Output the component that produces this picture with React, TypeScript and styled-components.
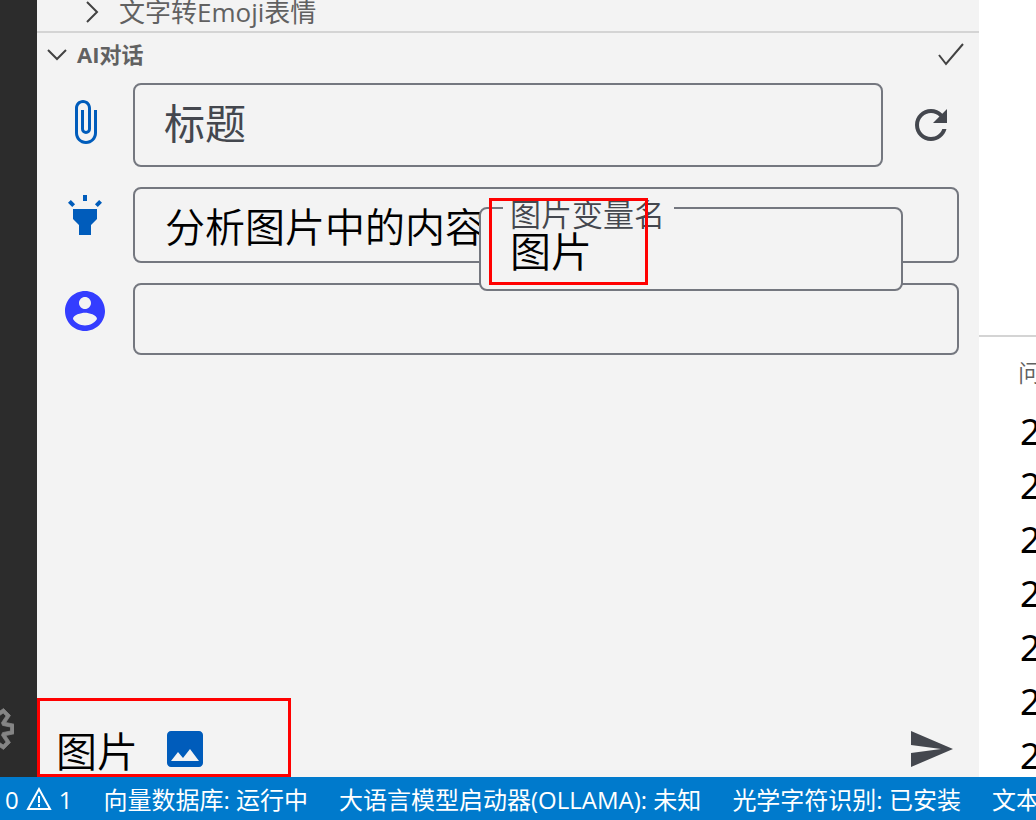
import React from "react";
import styled, { createGlobalStyle } from "styled-components";

const GlobalStyle = createGlobalStyle`
  *, *::before, *::after { box-sizing: border-box; }
  html { overflow: hidden; }
  body {
    margin: 0;
    background: #ffffff;
    font-family: "Open Sans", "Noto Sans CJK SC", sans-serif;
    color: #000000;
  }
  button { border: 0; padding: 0; background: none; font: inherit; color: inherit; cursor: pointer; }
  svg { display: block; flex: none; }
`;

const Shell = styled.div`
  display: flex;
  flex-direction: column;
  height: 100vh;
`;

const Workbench = styled.div`
  flex: 1;
  min-height: 0;
  display: grid;
  grid-template-columns: 37px minmax(0, 1fr) 57px;
`;

const ActivityBar = styled.nav`
  background: #2c2c2c;
  display: flex;
  flex-direction: column;
  justify-content: flex-end;
  align-items: flex-end;
  overflow: hidden;
  padding: 0 23px 24px 0;
  color: #858585;
`;

const SidePanel = styled.main`
  position: relative;
  background: #f3f3f3;
  display: flex;
  flex-direction: column;
  min-width: 0;
`;

const TreeRow = styled.button`
  height: 33px;
  border-bottom: 2px solid #d4d4d4;
  display: flex;
  align-items: center;
  gap: 14px;
  padding: 0 40px 8px 42px;
  font-family: "Noto Sans", "Noto Sans CJK SC", sans-serif;
  font-size: 26px;
  line-height: 36px;
  font-weight: 350;
  color: #616161;
  overflow: hidden;
`;

const TreeLabel = styled.span`
  font-family: "Open Sans", "Noto Sans CJK SC", sans-serif;
  font-weight: 400;
`;

const SectionHeader = styled.header`
  height: 44px;
  display: flex;
  align-items: center;
  justify-content: space-between;
  padding: 0 12px 2px 6px;
  color: #424242;
`;

const SectionToggle = styled.button`
  display: flex;
  align-items: center;
  gap: 6px;
  font-size: 22px;
  line-height: 32px;
  font-weight: 700;
  color: #616161;
`;

const ChatForm = styled.form`
  position: relative;
  flex: 1;
  display: flex;
  flex-direction: column;
  gap: 20px;
  padding: 6px 20px 4px 24px;
  color: #44474e;
`;

const FieldRow = styled.div`
  display: flex;
  gap: 24px;
`;

const LeadIcon = styled.span<{ $top?: number; $color?: string }>`
  padding-top: ${(p) => p.$top ?? 4}px;
  height: 48px;
  color: ${(p) => p.$color ?? "#005cbb"};
`;

const TextField = styled.input<{ $height: number }>`
  flex: 1;
  min-width: 0;
  height: ${(p) => p.$height}px;
  border: 2px solid #74777f;
  border-radius: 8px;
  background: transparent;
  padding: 0 30px;
  font-family: inherit;
  font-size: 40px;
  font-weight: 350;
  color: #000000;
  outline: none;
  &:placeholder-shown { padding: 0 29px 4px; }
  &::placeholder { color: #44474e; opacity: 1; font-size: 41px; font-weight: 400; }
`;

const IconButton = styled.button`
  display: flex;
  align-items: center;
  margin-right: 4px;
`;

const VariableField = styled.div`
  position: absolute;
  top: 130px;
  right: 76px;
  width: 424px;
  height: 84px;
  border: 2px solid #74777f;
  border-radius: 8px;
  background: #f3f3f3;
  padding: 18px 29px 0;
`;

const VariableLabel = styled.label`
  position: absolute;
  top: -17px;
  left: 22px;
  padding: 0 9px 0 7px;
  background: #f3f3f3;
  font-size: 31px;
  line-height: 44px;
  font-weight: 350;
`;

const VariableInput = styled.input`
  position: relative;
  width: 100%;
  height: 44px;
  border: 0;
  padding: 0;
  background: transparent;
  font-family: inherit;
  font-size: 41px;
  font-weight: 350;
  outline: none;
`;

const FieldMark = styled.span`
  position: absolute;
  top: -11px;
  left: 8px;
  width: 159px;
  height: 87px;
  border: 3px solid #ff0000;
`;

const Toolbar = styled.div`
  position: relative;
  margin-top: auto;
  display: flex;
  align-items: center;
  justify-content: space-between;
  margin-left: -5px;
`;

const Attachment = styled.div`
  display: flex;
  align-items: center;
  gap: 23px;
  font-size: 41px;
  line-height: 48px;
  font-weight: 350;
  color: #000000;
`;

const AttachmentText = styled.span`
  padding-top: 2px;
  height: 48px;
`;

const AttachmentMark = styled.span`
  position: absolute;
  bottom: -4px;
  left: -19px;
  width: 254px;
  height: 79px;
  border: 3px solid #ff0000;
`;

const SideColumn = styled.aside`
  overflow: hidden;
  background: #ffffff;
`;

const Editor = styled.div`
  height: 337px;
  border-bottom: 2px solid #d4d4d4;
`;

const PanelTab = styled.button`
  display: block;
  margin: 16px 0 0 39px;
  font-size: 24px;
  line-height: 40px;
  font-weight: 350;
  color: #616161;
  white-space: nowrap;
`;

const LogLines = styled.div`
  padding: 12px 0 0 41px;
  font-family: "Noto Sans", sans-serif;
  font-size: 36px;
  line-height: 54px;
`;

const StatusBar = styled.footer`
  height: 43px;
  background: #007acc;
  color: #ffffff;
  display: flex;
  align-items: center;
  gap: 31px;
  padding: 2px 0 0 5px;
  font-size: 24px;
  line-height: 40px;
  white-space: nowrap;
  overflow: hidden;
`;

const StatusItem = styled.button`
  display: flex;
  align-items: center;
  gap: 7px;
  flex: none;
`;

function MaterialIcon({ d }: { d: string }) {
  return (
    <svg width="48" height="48" viewBox="0 0 24 24" fill="currentColor" aria-hidden="true">
      <path d={d} />
    </svg>
  );
}

const icons = {
  attach: "M16.5 6v11.5c0 2.21-1.79 4-4 4s-4-1.79-4-4V5a2.5 2.5 0 0 1 5 0v10.5c0 .55-.45 1-1 1s-1-.45-1-1V6H10v9.5a2.5 2.5 0 0 0 5 0V5c0-2.21-1.79-4-4-4S7 2.79 7 5v12.5c0 3.04 2.46 5.5 5.5 5.5s5.5-2.46 5.5-5.5V6h-1.5z",
  highlight: "M6 14l3 3v5h6v-5l3-3V9H6zm5-12h2v3h-2zM3.5 5.875L4.914 4.46l2.12 2.122L5.62 7.997zm13.46.71l2.123-2.12 1.414 1.414L18.375 8z",
  account: "M12 2C6.48 2 2 6.48 2 12s4.48 10 10 10 10-4.48 10-10S17.52 2 12 2zm0 3c1.66 0 3 1.34 3 3s-1.34 3-3 3-3-1.34-3-3 1.34-3 3-3zm0 14.2c-2.5 0-4.71-1.28-6-3.22.03-1.99 4-3.08 6-3.08 1.99 0 5.97 1.09 6 3.08-1.29 1.94-3.5 3.22-6 3.22z",
  refresh: "M17.65 6.35C16.2 4.9 14.21 4 12 4c-4.42 0-7.99 3.58-7.99 8s3.57 8 7.99 8c3.73 0 6.84-2.55 7.73-6h-2.08c-.82 2.33-3.04 4-5.65 4-3.31 0-6-2.69-6-6s2.69-6 6-6c1.66 0 3.14.69 4.22 1.78L13 11h7V4l-2.35 2.35z",
  image: "M21 19V5c0-1.1-.9-2-2-2H5c-1.1 0-2 .9-2 2v14c0 1.1.9 2 2 2h14c1.1 0 2-.9 2-2zM8.5 13.5l2.5 3.01L14.5 12l4.5 6H5l3.5-4.5z",
  send: "M2.01 21L23 12 2.01 3 2 10l15 2-15 2z",
};

const logLines = ["2", "2", "2", "2", "2", "2", "2"];
const services = ["向量数据库: 运行中", "大语言模型启动器(OLLAMA): 未知", "光学字符识别: 已安装", "文本"];

export default function App() {
  return (
    <>
      <GlobalStyle />
      <Shell>
        <Workbench>
          <ActivityBar>
            <button type="button" aria-label="管理">
              <svg width="48" height="48" viewBox="0 0 24 24" fill="currentColor" stroke="currentColor" strokeWidth="0.4" aria-hidden="true">
                <path fillRule="evenodd" clipRule="evenodd" d="M19.85 8.75l4.15.83v4.84l-4.15.83 2.35 3.52-3.43 3.43-3.52-2.35-.83 4.15H9.58l-.83-4.15-3.52 2.35-3.43-3.43 2.35-3.52L0 14.42V9.58l4.15-.83L1.8 5.23 5.23 1.8l3.52 2.35L9.58 0h4.84l.83 4.15 3.52-2.35 3.43 3.43-2.35 3.52zm-1.57 5.07l4-.81v-2l-4-.81-.54-1.3 2.29-3.43-1.43-1.43-3.43 2.29-1.3-.54-.81-4h-2l-.81 4-1.3.54-3.43-2.29-1.43 1.43L6.38 8.9l-.54 1.3-4 .81v2l4 .81.54 1.3-2.29 3.43 1.43 1.43 3.43-2.29 1.3.54.81 4h2l.81-4 1.3-.54 3.43 2.29 1.43-1.43-2.29-3.43.54-1.3z" />
              </svg>
            </button>
          </ActivityBar>

          <SidePanel>
            <TreeRow type="button">
              <svg width="26" height="26" viewBox="0 0 26 26" fill="none" stroke="#424242" strokeWidth="2" aria-hidden="true">
                <path d="M8 3l10 10-10 10" />
              </svg>
              <TreeLabel>文字转Emoji表情</TreeLabel>
            </TreeRow>
            <SectionHeader>
              <SectionToggle type="button">
                <svg width="28" height="28" viewBox="0 0 28 28" fill="none" stroke="#424242" strokeWidth="2" aria-hidden="true">
                  <path d="M5 10l9 9 9-9" />
                </svg>
                AI对话
              </SectionToggle>
              <button type="button" aria-label="确认">
                <svg width="32" height="32" viewBox="0 0 32 32" fill="none" stroke="#424242" strokeWidth="2" aria-hidden="true">
                  <path d="M4 17l7 9L28 6" />
                </svg>
              </button>
            </SectionHeader>

            <ChatForm onSubmit={(e) => e.preventDefault()}>
              <FieldRow>
                <LeadIcon $top={15}><MaterialIcon d={icons.attach} /></LeadIcon>
                <TextField $height={84} placeholder="标题" aria-label="标题" />
                <IconButton type="button" aria-label="刷新"><MaterialIcon d={icons.refresh} /></IconButton>
              </FieldRow>
              <FieldRow>
                <LeadIcon><MaterialIcon d={icons.highlight} /></LeadIcon>
                <TextField $height={76} defaultValue="分析图片中的内容" aria-label="系统提示" />
              </FieldRow>
              <FieldRow>
                <LeadIcon $color="#343dff"><MaterialIcon d={icons.account} /></LeadIcon>
                <TextField $height={72} aria-label="用户消息" />
              </FieldRow>

              <VariableField>
                <VariableLabel htmlFor="image-variable">图片变量名</VariableLabel>
                <VariableInput id="image-variable" defaultValue="图片" />
                <FieldMark />
              </VariableField>

              <Toolbar>
                <Attachment>
                  <AttachmentText>图片</AttachmentText>
                  <button type="button" aria-label="添加图片">
                    <LeadIcon $top={0}><MaterialIcon d={icons.image} /></LeadIcon>
                  </button>
                </Attachment>
                <IconButton type="submit" aria-label="发送"><MaterialIcon d={icons.send} /></IconButton>
                <AttachmentMark />
              </Toolbar>
            </ChatForm>
          </SidePanel>

          <SideColumn>
            <Editor />
            <PanelTab type="button">问题</PanelTab>
            <LogLines>
              {logLines.map((line, i) => <div key={i}>{line}</div>)}
            </LogLines>
          </SideColumn>
        </Workbench>

        <StatusBar>
          <StatusItem type="button">
            0
            <svg width="26" height="26" viewBox="0 0 26 26" fill="none" stroke="currentColor" strokeWidth="2" aria-hidden="true">
              <path d="M13 2L2 22h22zM13 9v7M13 17v3" />
            </svg>
            1
          </StatusItem>
          {services.map((s) => <StatusItem type="button" key={s}>{s}</StatusItem>)}
        </StatusBar>
      </Shell>
    </>
  );
}
